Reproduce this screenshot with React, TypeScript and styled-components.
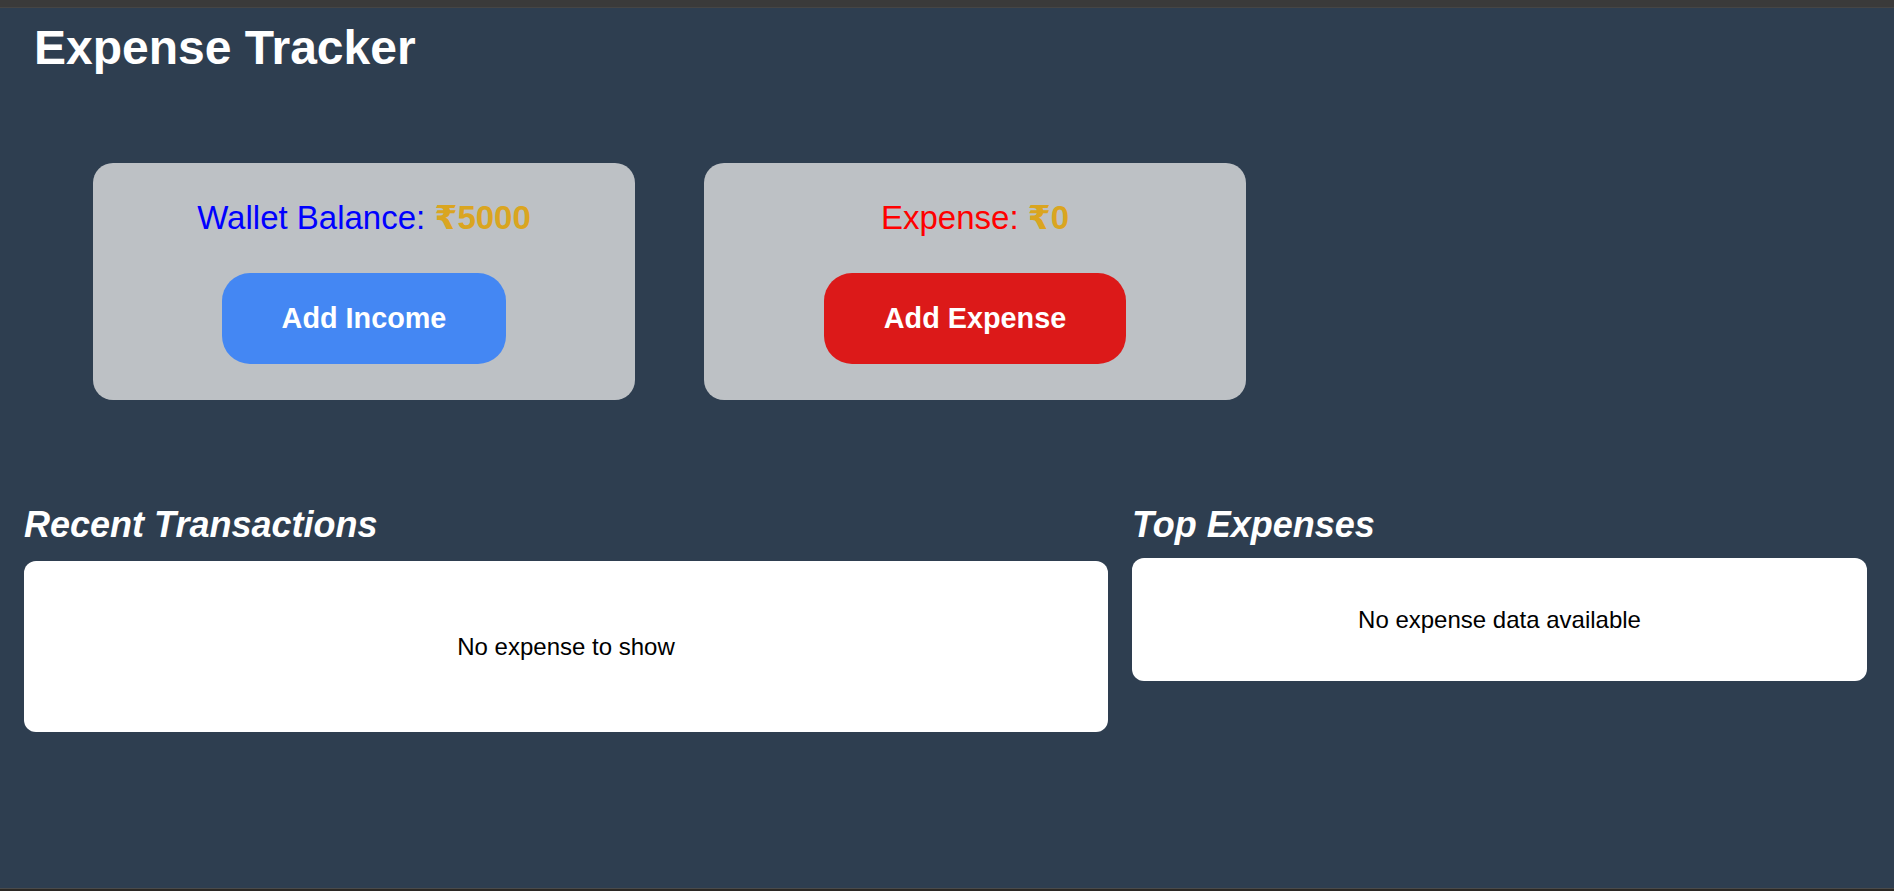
import React from "react";
import styled, { createGlobalStyle } from "styled-components";

const GlobalStyle = createGlobalStyle`
  html, body {
    margin: 0;
    padding: 0;
    background: #2e3e50;
    font-family: "Liberation Sans", Arial, "DejaVu Sans", sans-serif;
  }
  * { box-sizing: border-box; }
`;

const Page = styled.div`
  height: 100vh;
  display: flex;
  flex-direction: column;
  background: #2e3e50;
  overflow: hidden;
`;

const TopStrip = styled.div`
  height: 8px;
  flex: none;
  background: #3a3a3a;
  border-bottom: 1px solid #454545;
`;

const BottomStrip = styled.div`
  height: 3px;
  flex: none;
  background: #2b2824;
  border-top: 1px solid #4a4a4a;
`;

const Main = styled.main`
  flex: 1;
  padding: 0 27px 0 24px;
  display: flex;
  flex-direction: column;
`;

const Title = styled.h1`
  margin: 12px 0 0 10px;
  font-size: 48px;
  line-height: 1.15;
  font-weight: 700;
  color: #ffffff;
`;

const CardsRow = styled.div`
  display: flex;
  gap: 69px;
  margin: 88px 0 0 69px;
`;

const Card = styled.div`
  width: 542px;
  padding: 35px 20px 36px;
  background: #bdc1c5;
  border-radius: 20px;
  display: flex;
  flex-direction: column;
  align-items: center;
  gap: 36px;
`;

const CardLabel = styled.div<{ $color: string }>`
  font-size: 33px;
  line-height: 39px;
  color: ${(p) => p.$color};
`;

const Amount = styled.span`
  font-weight: 700;
  color: #daa520;
`;

const ActionButton = styled.button<{ $bg: string }>`
  border: none;
  border-radius: 28px;
  padding: 29px 60px;
  background: ${(p) => p.$bg};
  color: #ffffff;
  font-family: inherit;
  font-size: 28.8px;
  line-height: 1.15;
  font-weight: 700;
  cursor: pointer;
`;

const BottomGrid = styled.div`
  display: grid;
  grid-template-columns: 1084fr 735fr;
  gap: 24px;
  margin-top: 104px;
  align-items: start;
`;

const Section = styled.section`
  display: flex;
  flex-direction: column;
`;

const SectionTitle = styled.h2<{ $gap: number }>`
  margin: 0 0 ${(p) => p.$gap}px;
  font-size: 36px;
  line-height: 1.15;
  font-weight: 700;
  font-style: italic;
  color: #ffffff;
`;

const Panel = styled.div<{ $pad: number }>`
  background: #ffffff;
  border-radius: 12px;
  padding: ${(p) => p.$pad}px 20px;
  text-align: center;
  font-size: 24px;
  line-height: 1.15;
  color: #000000;
`;

export default function App() {
  return (
    <>
      <GlobalStyle />
      <Page>
        <TopStrip />
        <Main>
          <Title>Expense Tracker</Title>
          <CardsRow>
            <Card>
              <CardLabel $color="#0000ff">
                Wallet Balance: <Amount>₹5000</Amount>
              </CardLabel>
              <ActionButton $bg="#4487f3">Add Income</ActionButton>
            </Card>
            <Card>
              <CardLabel $color="#ff0000">
                Expense: <Amount>₹0</Amount>
              </CardLabel>
              <ActionButton $bg="#dc1919">Add Expense</ActionButton>
            </Card>
          </CardsRow>
          <BottomGrid>
            <Section>
              <SectionTitle $gap={15}>Recent Transactions</SectionTitle>
              <Panel $pad={72}>No expense to show</Panel>
            </Section>
            <Section>
              <SectionTitle $gap={12}>Top Expenses</SectionTitle>
              <Panel $pad={48}>No expense data available</Panel>
            </Section>
          </BottomGrid>
        </Main>
        <BottomStrip />
      </Page>
    </>
  );
}
